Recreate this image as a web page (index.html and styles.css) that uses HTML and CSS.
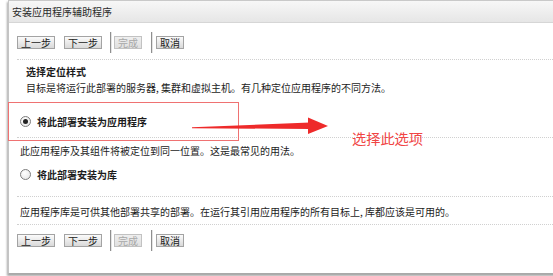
FILE: index.html
```html
<!DOCTYPE html>
<html lang="zh-CN">
<head>
<meta charset="utf-8">
<title>安装应用程序辅助程序</title>
<link rel="stylesheet" href="styles.css">
</head>
<body>
<div class="page">
  <div class="panel">
    <div class="header">安装应用程序辅助程序</div>
    <div class="content">
      <div class="toolbar">
        <button class="btn gap9">上一步</button>
        <button class="btn gap8">下一步</button>
        <span class="sep gap2"></span>
        <button class="btn disabled gap9">完成</button>
        <span class="sep gap3"></span>
        <button class="btn">取消</button>
      </div>
      <div class="rule"></div>
      <div class="section">
        <div class="heading">选择定位样式</div>
        <div class="desc">目标是将运行此部署的服务器, 集群和虚拟主机。有几种定位应用程序的不同方法。</div>
      </div>
      <div class="option option-app">
        <span class="radio checked"></span><span class="label">将此部署安装为应用程序</span>
      </div>
      <div class="note">此应用程序及其组件将被定位到同一位置。这是最常见的用法。</div>
      <div class="option option-lib">
        <span class="radio"></span><span class="label">将此部署安装为库</span>
      </div>
      <div class="note note-last">应用程序库是可供其他部署共享的部署。在运行其引用应用程序的所有目标上, 库都应该是可用的。</div>
      <div class="toolbar toolbar-bottom">
        <button class="btn gap9">上一步</button>
        <button class="btn gap8">下一步</button>
        <span class="sep gap2"></span>
        <button class="btn disabled gap9">完成</button>
        <span class="sep gap3"></span>
        <button class="btn">取消</button>
      </div>
    </div>
  </div>

  <div class="callout-box"></div>
  <svg class="callout-arrow" width="140" height="22" viewBox="0 0 140 22" aria-hidden="true">
    <polygon points="2,15.2 120,10.5 120,17 2,16.2" fill="#ee2a2a"/>
    <polygon points="118,5.5 138,14 118,22" fill="#ee2a2a"/>
  </svg>
  <div class="callout-text">选择此选项</div>
</div>
</body>
</html>
```

FILE: styles.css
```css
html, body {
  margin: 0;
  padding: 0;
  background: #ffffff;
}

body {
  font-family: "Noto Sans CJK SC", "Noto Sans", sans-serif;
  font-size: 10px;
  color: #1c1c1c;
  overflow: hidden;
}

.page {
  position: relative;
  width: 553px;
  height: 276px;
  overflow: hidden;
}

.panel {
  margin-left: 8px;
  width: 560px;
  border-top: 1px solid #c9c9c9;
  border-left: 1px solid #c4c4c4;
  border-bottom: 1px solid #a9a9a9;
  box-shadow: -1px 2px 2px rgba(0, 0, 0, 0.35);
  background: #ffffff;
}

.header {
  height: 21px;
  line-height: 21px;
  padding-left: 3px;
  background: linear-gradient(#f7f7f7, #e6e6e6);
  border-bottom: 1px solid #d6d6d6;
  color: #2a2a2a;
}

.content {
  padding: 0 0 22px 8px;
}

.toolbar {
  display: flex;
  align-items: center;
  height: 21px;
  margin-top: 9px;
}

.toolbar-bottom {
  margin-top: 5px;
}

.btn {
  font-family: inherit;
  font-size: 10px;
  color: #222222;
  height: 13px;
  line-height: 11px;
  padding: 0 3px;
  margin: 0;
  border: 1px solid #a3a3a3;
  border-radius: 0;
  background: linear-gradient(#fbfbfb, #d9d9d9);
}

.btn.disabled {
  color: #a8a8a8;
  border-color: #c2c2c2;
  background: linear-gradient(#efefef, #e0e0e0);
}

.gap9 { margin-right: 9px; }
.gap8 { margin-right: 8px; }
.gap3 { margin-right: 3px; }
.gap2 { margin-right: 2px; }

.sep {
  width: 1px;
  height: 21px;
  background: #8f8f8f;
  border-right: 1px solid #e4e4e4;
}

.rule {
  margin-top: 6px;
  border-top: 1px dotted #d0d0d0;
}

.section {
  padding-left: 9px;
  margin-top: 4px;
}

.heading {
  line-height: 16px;
  font-weight: bold;
}

.desc {
  line-height: 16px;
}

.option {
  display: flex;
  align-items: center;
  padding-left: 3px;
  border-bottom: 1px dotted #d0d0d0;
}

.option-app {
  margin-top: 10px;
  height: 31px;
}

.option-lib {
  margin-top: 1px;
  height: 28px;
  padding-bottom: 8px;
}

.radio {
  box-sizing: border-box;
  width: 11px;
  height: 11px;
  border-radius: 50%;
  border: 1px solid #7d7d7d;
  background: radial-gradient(circle at 40% 35%, #ffffff, #e2e2e2);
  display: flex;
  align-items: center;
  justify-content: center;
}

.radio.checked::after {
  content: "";
  width: 5px;
  height: 5px;
  border-radius: 50%;
  background: #222222;
}

.label {
  margin-left: 6px;
  font-weight: bold;
}

.note {
  line-height: 16px;
  padding-left: 3px;
  margin-top: 5px;
}

.note-last {
  margin-top: 7px;
  padding-bottom: 4px;
  border-bottom: 1px dotted #d0d0d0;
}

.callout-box {
  position: absolute;
  left: 8px;
  top: 102px;
  width: 229px;
  height: 37px;
  border: 1px solid #ef7272;
}

.callout-arrow {
  position: absolute;
  left: 190px;
  top: 112px;
}

.callout-text {
  position: absolute;
  left: 352px;
  top: 128px;
  font-size: 14.2px;
  line-height: 20px;
  color: #f04444;
}
```
